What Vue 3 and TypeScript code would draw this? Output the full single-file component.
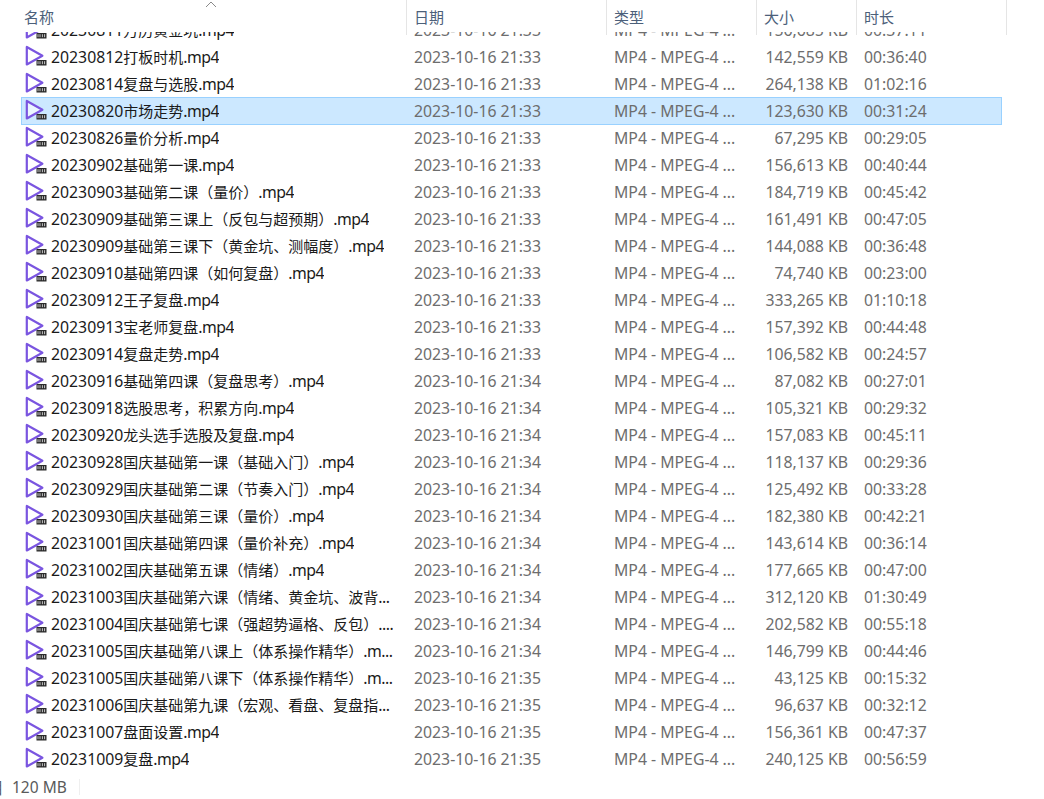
<script setup lang="ts">
interface Seg { text: string; cls: string }
interface Row { name: Seg[]; key: string; date: string; size: string; dur: string; sel?: boolean }
const raw = `20230811万历黄金坑.mp4|21:33|156,685 KB|00:37:11
20230812打板时机.mp4|21:33|142,559 KB|00:36:40
20230814复盘与选股.mp4|21:33|264,138 KB|01:02:16
20230820市场走势.mp4|21:33|123,630 KB|00:31:24
20230826量价分析.mp4|21:33|67,295 KB|00:29:05
20230902基础第一课.mp4|21:33|156,613 KB|00:40:44
20230903基础第二课（量价）.mp4|21:33|184,719 KB|00:45:42
20230909基础第三课上（反包与超预期）.mp4|21:33|161,491 KB|00:47:05
20230909基础第三课下（黄金坑、测幅度）.mp4|21:33|144,088 KB|00:36:48
20230910基础第四课（如何复盘）.mp4|21:33|74,740 KB|00:23:00
20230912王子复盘.mp4|21:33|333,265 KB|01:10:18
20230913宝老师复盘.mp4|21:33|157,392 KB|00:44:48
20230914复盘走势.mp4|21:33|106,582 KB|00:24:57
20230916基础第四课（复盘思考）.mp4|21:34|87,082 KB|00:27:01
20230918选股思考，积累方向.mp4|21:34|105,321 KB|00:29:32
20230920龙头选手选股及复盘.mp4|21:34|157,083 KB|00:45:11
20230928国庆基础第一课（基础入门）.mp4|21:34|118,137 KB|00:29:36
20230929国庆基础第二课（节奏入门）.mp4|21:34|125,492 KB|00:33:28
20230930国庆基础第三课（量价）.mp4|21:34|182,380 KB|00:42:21
20231001国庆基础第四课（量价补充）.mp4|21:34|143,614 KB|00:36:14
20231002国庆基础第五课（情绪）.mp4|21:34|177,665 KB|00:47:00
20231003国庆基础第六课（情绪、黄金坑、波背...|21:34|312,120 KB|01:30:49
20231004国庆基础第七课（强超势逼格、反包）....|21:34|202,582 KB|00:55:18
20231005国庆基础第八课上（体系操作精华）.m...|21:34|146,799 KB|00:44:46
20231005国庆基础第八课下（体系操作精华）.m...|21:35|43,125 KB|00:15:32
20231006国庆基础第九课（宏观、看盘、复盘指...|21:35|96,637 KB|00:32:12
20231007盘面设置.mp4|21:35|156,361 KB|00:47:37
20231009复盘.mp4|21:35|240,125 KB|00:56:59`
function split(name: string): Seg[] {
  const parts = name.match(/[\x00-\x7f]+|[^\x00-\x7f]+/g) ?? []
  return parts.map((text, i) => ({
    text,
    cls: /[^\x00-\x7f]/.test(text) ? 'cjk' : i === 0 ? '' : 'tail'
  }))
}
const rows: Row[] = raw.split('\n').map((l, i) => {
  const [name, t, size, dur] = l.split('|')
  return { name: split(name), key: name, date: `2023-10-16 ${t}`, size, dur, sel: i === 3 }
})
const heads = ['名称', '日期', '类型', '大小', '时长']
</script>

<template>
  <div class="page">
    <header class="head">
      <div v-for="h in heads" :key="h" class="hcell">{{ h }}</div>
      <svg class="sort" width="12" height="7" viewBox="0 0 12 7"><path d="M1 6l5-5 5 5" fill="none" stroke="#8a8a8a" stroke-width="1" /></svg>
    </header>
    <main class="list">
      <div class="rows">
        <div v-for="r in rows" :key="r.key" class="row" :class="{ sel: r.sel }">
          <div class="name">
            <svg class="ico" width="24" height="22" viewBox="0 0 24 22">
              <path d="M2.8 2v17.5L18.4 10.7z" fill="#fff" fill-opacity="0.6" stroke="#7a55e0" stroke-width="2.2" stroke-linejoin="round" />
              <rect x="12.5" y="15" width="10" height="5.5" fill="#2b2b2b" />
              <path d="M14 16.2v3M16 16.2v3M18.4 16.2v3M20.6 16.2v3" stroke="#c8c8c8" stroke-width="1" />
            </svg>
            <span class="ntext"><span v-for="(s, i) in r.name" :key="i" :class="s.cls">{{ s.text }}</span></span>
          </div>
          <div class="cell">{{ r.date }}</div>
          <div class="cell">MP4 - MPEG-4 ...</div>
          <div class="cell size">{{ r.size }}</div>
          <div class="cell dur">{{ r.dur }}</div>
        </div>
      </div>
    </main>
    <footer class="status">
      <span class="clip">目</span>
      <span class="total">120 MB</span>
      <i class="sep"></i>
    </footer>
  </div>
</template>

<style scoped>
.page {
  width: 1044px;
  height: 799px;
  overflow: hidden;
  display: flex;
  flex-direction: column;
  background: #fff;
  font-family: "Noto Sans", "Noto Sans CJK SC", sans-serif;
  font-size: 15.8px;
}
.head {
  position: relative;
  flex: none;
  height: 32px;
  margin-left: 21px;
  display: grid;
  grid-template-columns: 386px 200px 150px 100px 150px;
  width: 986px;
}
.hcell {
  border-right: 1px solid #e5e5e5;
  padding-left: 3px;
  color: #4c607a;
  line-height: 35px;
  font-size: 15px;
}
.hcell:not(:first-child) {
  padding-left: 7px;
}
.sort {
  position: absolute;
  left: 184px;
  top: 1px;
}
.list {
  flex: none;
  height: 746px;
  overflow: hidden;
  padding-left: 21px;
}
.rows {
  width: 981px;
  margin-top: -15px;
}
.row {
  height: 27px;
  display: grid;
  grid-template-columns: 386px 200px 150px 100px 145px;
  align-items: center;
  box-sizing: border-box;
  line-height: 27px;
  white-space: nowrap;
}
.row.sel {
  background: #cce8ff;
  outline: 1px solid #99d1ff;
  outline-offset: -1px;
  height: 28px;
  margin-top: -1px;
}
.name {
  display: flex;
  align-items: center;
  color: #1a1a1a;
  padding-left: 3px;
}
.ico {
  flex: none;
  margin-right: 3px;
  margin-top: -3px;
}
.ntext {
  overflow: hidden;
}
.cjk {
  font-size: 15px;
}
.tail {
  letter-spacing: -0.5px;
}
.cell {
  color: #6d6d6d;
  padding-left: 7px;
}
.cell.size {
  text-align: right;
  padding: 0 9px 0 0;
}
.dur {
  padding-left: 7px;
}
.status {
  flex: 1;
  display: flex;
  align-items: center;
  color: #5a5a5a;
  overflow: hidden;
  position: relative;
  padding-bottom: 3px;
  font-size: 15.5px;
}
.clip {
  margin-left: -12px;
  width: 15px;
  flex: none;
}
.total {
  margin-left: 9px;
}
.sep {
  margin-left: 12px;
  width: 1px;
  height: 16px;
  background: #efefef;
}
</style>
